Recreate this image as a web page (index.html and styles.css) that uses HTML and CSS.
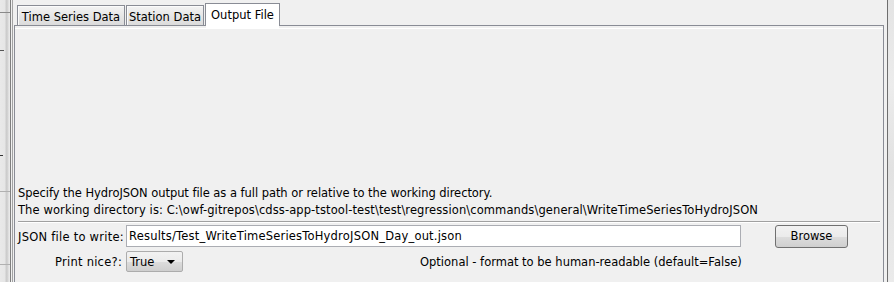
FILE: index.html
```html
<!DOCTYPE html>
<html>
<head>
<meta charset="utf-8">
<link rel="stylesheet" href="styles.css">
</head>
<body>
<div class="gutter-left">
  <div class="strip">
    <div class="mark m1"></div>
    <div class="mark m2"></div>
    <div class="mark m3"></div>
    <div class="mark m4"></div>
    <div class="mark m5"></div>
  </div>
  <div class="vline dark"></div>
  <div class="vline light"></div>
  <div class="vline mid"></div>
  <div class="vline light"></div>
</div>
<div class="main">
  <div class="tabs">
    <div class="tab t1">Time Series Data</div>
    <div class="tab t2">Station Data</div>
    <div class="tab t3 selected">Output File</div>
  </div>
  <div class="panel">
    <div class="highlight"></div>
    <div class="spacer"></div>
    <div class="info l1">Specify the HydroJSON output file as a full path or relative to the working directory.</div>
    <div class="info l2">The working directory is: C:\owf-gitrepos\cdss-app-tstool-test\test\regression\commands\general\WriteTimeSeriesToHydroJSON</div>
    <div class="separator"></div>
    <div class="row row1">
      <div class="label">JSON file to write:</div>
      <div class="field">Results/Test_WriteTimeSeriesToHydroJSON_Day_out.json</div>
      <div class="button">Browse</div>
    </div>
    <div class="row row2">
      <div class="label">Print nice?:</div>
      <div class="combo"><span class="combo-text">True</span><span class="arrow"></span></div>
      <div class="note">Optional - format to be human-readable (default=False)</div>
    </div>
  </div>
</div>
<div class="frame-line"></div>
<div class="gutter-right"></div>
</body>
</html>
```

FILE: styles.css
```css
html, body {
  margin: 0;
  padding: 0;
}
body {
  width: 894px;
  height: 282px;
  overflow: hidden;
  background: #f0f0f0;
  display: flex;
  font-family: "DejaVu Sans", Verdana, sans-serif;
  font-size: 11.5px;
  color: #000;
}
.gutter-left {
  display: flex;
  width: 14px;
  flex: none;
}
.strip {
  width: 10px;
  background: linear-gradient(to right, #e9e9e9 0, #e6e6e6 45%, #c9c9c9 68%, #e6e6e6 90%, #ececec 100%);
  display: flex;
  flex-direction: column;
}
.mark {
  height: 1px;
  background: #8a8a8a;
}
.m1 { margin-top: 12px; }
.m2 { margin-top: 37px; width: 4px; background: #555; }
.m3 { margin-top: 104px; width: 3px; background: #333; }
.m4 { margin-top: 35px; background: #b0b0b0; }
.m5 { margin-top: 72px; background: #b0b0b0; }
.vline { width: 1px; }
.vline.dark { background: #7f7f7f; }
.vline.light { background: #f0f0f0; }
.vline.mid { background: #a3a3a3; }

.main {
  width: 873px;
  flex: none;
  display: flex;
  flex-direction: column;
}
.tabs {
  display: flex;
  align-items: flex-end;
  height: 25px;
  padding-left: 3px;
  box-sizing: border-box;
}
.tab {
  box-sizing: border-box;
  height: 20px;
  border: 1px solid #898c95;
  border-bottom: none;
  background: linear-gradient(#f3f3f3, #e8e8e8 45%, #dbdbdb 100%);
  box-shadow: inset 1px 1px 0 #fbfbfb;
  padding-top: 3px;
  line-height: 16px;
  text-align: center;
  margin-right: 1px;
  white-space: nowrap;
}
.t1 { width: 108px; }
.t2 { width: 78px; }
.t3 { width: 75px; }
.tab.selected {
  position: relative;
  z-index: 1;
  height: 23px;
  margin-bottom: -1px;
  background: #ffffff;
  box-shadow: none;
  padding-top: 3px;
}
.tab.selected::after {
  content: "";
  position: absolute;
  left: 0;
  right: 0;
  bottom: -3px;
  height: 3px;
  background: #ffffff;
}
.panel {
  width: 870px;
  box-sizing: border-box;
  flex: 1;
  border: 1px solid #898c95;
  border-bottom: none;
  display: flex;
  flex-direction: column;
}
.highlight {
  height: 1px;
  margin-top: 2px;
  background: #ffffff;
}
.spacer {
  height: 156px;
  flex: none;
}
.info {
  padding-left: 3px;
  line-height: 17px;
  height: 17px;
  white-space: nowrap;
}
.l1 { letter-spacing: -0.05px; }
.l2 { letter-spacing: 0.1px; }
.separator {
  margin: 2px 3px 0 3px;
  height: 1px;
  background: #a0a0a0;
  border-bottom: 1px solid #ffffff;
}
.row {
  display: flex;
  align-items: center;
  padding-left: 3px;
}
.row1 {
  margin-top: 2px;
  height: 23px;
}
.row2 {
  margin-top: 3px;
  height: 21px;
}
.label {
  width: 104px;
  text-align: right;
  white-space: nowrap;
  flex: none;
  letter-spacing: 0.25px;
}
.field {
  margin-left: 4px;
  width: 615px;
  height: 22px;
  box-sizing: border-box;
  border: 1px solid #abadb3;
  background: #ffffff;
  padding: 1px 0 0 2px;
  line-height: 19px;
  white-space: nowrap;
  align-self: flex-start;
  letter-spacing: 0.2px;
}
.button {
  margin-left: 34px;
  width: 73px;
  height: 23px;
  box-sizing: border-box;
  border: 1px solid #707070;
  border-radius: 3px;
  background: linear-gradient(#f2f2f2 0, #ebebeb 50%, #dddddd 51%, #cfcfcf 100%);
  text-align: center;
  line-height: 21px;
}
.combo {
  margin-left: 4px;
  width: 57px;
  height: 21px;
  box-sizing: border-box;
  border: 1px solid #acacac;
  border-radius: 2px;
  background: linear-gradient(#f2f2f2 0, #ebebeb 50%, #dddddd 51%, #cfcfcf 100%);
  display: flex;
  align-items: center;
  padding-left: 3px;
}
.combo-text {
  line-height: 19px;
  padding-top: 1px;
}
.arrow {
  margin-left: auto;
  margin-right: 7px;
  width: 0;
  height: 0;
  border-left: 4px solid transparent;
  border-right: 4px solid transparent;
  border-top: 4px solid #000;
}
.note {
  margin-left: 237px;
  white-space: nowrap;
}

.frame-line {
  width: 1px;
  flex: none;
  background: #6e6e6e;
}
.gutter-right {
  width: 6px;
  flex: none;
  background: linear-gradient(#e4e4e4, #ececec 30%, #e2e2e2 60%, #ebebeb 100%);
}
```
